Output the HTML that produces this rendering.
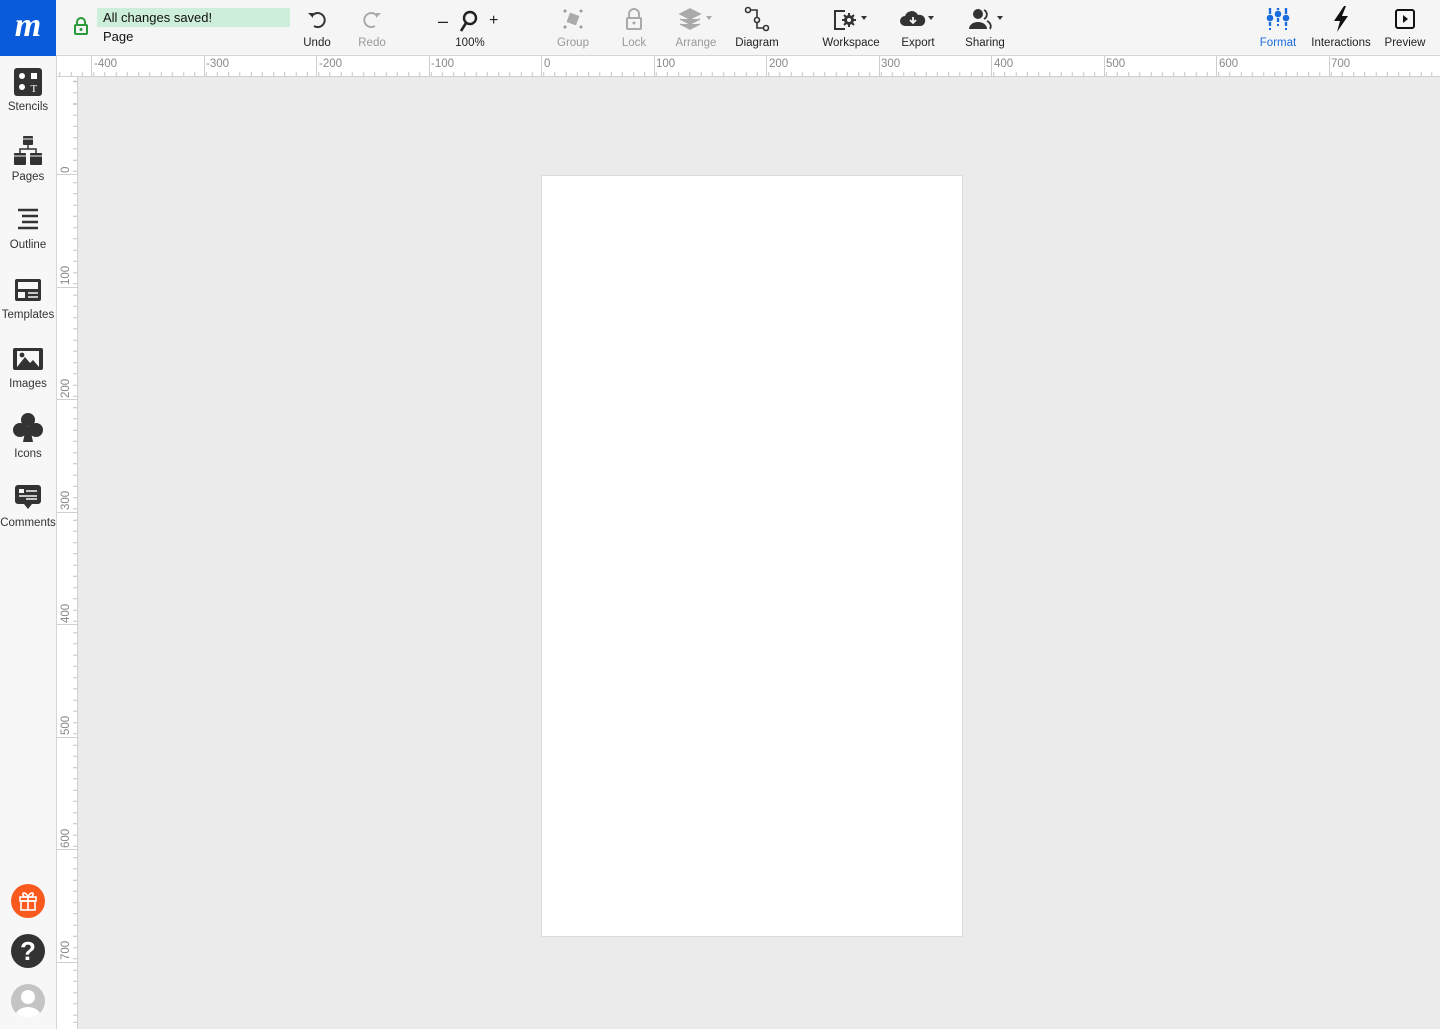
<!DOCTYPE html>
<html><head><meta charset="utf-8"><style>
*{margin:0;padding:0;box-sizing:border-box}
body{width:1440px;height:1029px;overflow:hidden;background:#ebebeb;font-family:"Liberation Sans",sans-serif;position:relative}
.top{position:absolute;left:0;top:0;width:1440px;height:56px;background:#f5f5f5;border-bottom:1px solid #d6d6d6}
.logo{position:absolute;left:0;top:0;width:56px;height:56px;background:#0a5bdc;color:#fff;font:italic bold 34px "Liberation Serif",serif;text-align:center;line-height:52px}
.side{position:absolute;left:0;top:56px;width:57px;height:973px;background:#f7f7f7;border-right:1px solid #d6d6d6}
.tb{position:absolute;top:0;height:56px;text-align:center;font-size:11.5px;color:#222}
.tb .l{position:absolute;left:0;right:0;top:37px}
.tb svg{position:absolute;top:8px;left:50%;transform:translateX(-50%)}
.dis{color:#999}
.si{position:absolute;left:0;width:56px;text-align:center;font-size:11.5px;color:#333}
.si svg{display:block;margin:0 auto 5px}
.hr{position:absolute;left:57px;top:56px;width:1383px;height:21px;background:#fff;border-bottom:1px solid #d0d0d0;overflow:hidden}
.vr{position:absolute;left:57px;top:77px;width:21px;height:952px;background:#fff;border-right:1px solid #d0d0d0;overflow:hidden}
.hr .t{position:absolute;left:0;bottom:0;width:100%;height:4px;background:repeating-linear-gradient(to right,#c4c4c4 0 1px,transparent 1px 11.25px)}
.hr .M{position:absolute;top:0;height:21px;width:1px;background:#cfcfcf}
.hr span{position:absolute;top:2px;font-size:11.5px;color:#888}
.vr .t{position:absolute;right:0;top:0;width:4px;height:100%;background:repeating-linear-gradient(to bottom,#c4c4c4 0 1px,transparent 1px 11.25px)}
.vr .M{position:absolute;left:0;width:21px;height:1px;background:#cfcfcf}
.vr span{position:absolute;left:3px;font-size:11.5px;color:#888;transform:rotate(-90deg);transform-origin:left top;white-space:nowrap}
.page{position:absolute;left:541px;top:175px;width:422px;height:762px;background:#fff;border:1px solid #dcdcdc}
.circ{position:absolute;left:11px;width:34px;height:34px;border-radius:50%}
</style></head><body>
<div class="top">
<div class="logo">m</div>
<svg style="position:absolute;left:73px;top:17px" width="16" height="18" viewBox="0 0 16 18"><path d="M4 8V5a4 4 0 0 1 8 0v3" fill="none" stroke="#2a9a3a" stroke-width="2"/><rect x="2" y="8" width="12" height="9" rx="1" fill="none" stroke="#2a9a3a" stroke-width="2"/><circle cx="8" cy="12.5" r="1.5" fill="#2a9a3a"/></svg>
<div style="position:absolute;left:97px;top:8px;width:193px;height:19px;background:#cdeed8;font-size:13px;line-height:19px;padding-left:6px;color:#111">All changes saved!</div>
<div style="position:absolute;left:103px;top:29px;font-size:13px;color:#111">Page</div>
<div class="tb" style="left:297px;width:40px"><svg width="22" height="22" viewBox="0 0 22 22"><path d="M6 8a7 7 0 1 1 2 10" fill="none" stroke="#333" stroke-width="2"/><path d="M2 5l5 0 0 5z" fill="#333"/></svg><div class="l">Undo</div></div>
<div class="tb dis" style="left:352px;width:40px"><svg width="22" height="22" viewBox="0 0 22 22"><path d="M16 8a7 7 0 1 0 -2 10" fill="none" stroke="#aaa" stroke-width="2"/><path d="M20 5l-5 0 0 5z" fill="#aaa"/></svg><div class="l">Redo</div></div>
<div style="position:absolute;left:438px;top:11px;font-size:18px;color:#222">–</div>
<svg style="position:absolute;left:458px;top:10px" width="22" height="24" viewBox="0 0 22 24"><circle cx="12" cy="8" r="6" fill="none" stroke="#222" stroke-width="2.4"/><path d="M8 13l-5 8" stroke="#222" stroke-width="2.6"/></svg>
<div style="position:absolute;left:489px;top:12px;font-size:16px;color:#222">+</div>
<div class="tb" style="left:450px;width:40px"><div class="l">100%</div></div>
<div class="tb dis" style="left:553px;width:40px"><svg width="22" height="22" viewBox="0 0 22 22"><rect x="6" y="6" width="10" height="10" fill="#aaa" transform="rotate(20 11 11)"/><g fill="#999"><circle cx="3" cy="3" r="1.5"/><circle cx="19" cy="3" r="1.5"/><circle cx="3" cy="19" r="1.5"/><circle cx="19" cy="19" r="1.5"/></g></svg><div class="l">Group</div></div>
<div class="tb dis" style="left:614px;width:40px"><svg width="18" height="22" viewBox="0 0 18 22"><path d="M4 10V6a5 5 0 0 1 10 0v4" fill="none" stroke="#aaa" stroke-width="2"/><rect x="2" y="10" width="14" height="11" rx="1" fill="none" stroke="#aaa" stroke-width="2"/><circle cx="9" cy="15" r="1.5" fill="#aaa"/></svg><div class="l">Lock</div></div>
<div class="tb dis" style="left:672px;width:48px"><svg width="36" height="22" viewBox="0 0 36 22"><path d="M2 6l10-5 10 5-10 5z M2 11l10 5 10-5 M2 16l10 5 10-5" fill="#aaa" stroke="#aaa" stroke-width="1.5"/><path d="M28 8h6l-3 4z" fill="#aaa"/></svg><div class="l">Arrange</div></div>
<div class="tb" style="left:733px;width:48px"><svg width="26" height="26" viewBox="0 0 26 26" style="top:6px"><circle cx="4" cy="4" r="2.5" fill="none" stroke="#333" stroke-width="1.6"/><circle cx="13" cy="14" r="2.5" fill="none" stroke="#333" stroke-width="1.6"/><circle cx="22" cy="22" r="2.5" fill="none" stroke="#333" stroke-width="1.6"/><path d="M6.5 4H13V11.5M13 16.5V22H19.5" fill="none" stroke="#333" stroke-width="1.6"/></svg><div class="l">Diagram</div></div>
<div class="tb" style="left:818px;width:66px"><svg width="38" height="24" viewBox="0 0 38 24"><path d="M13 3H3v18h10" fill="none" stroke="#333" stroke-width="2"/><path d="M17 5v14M10 12h14M12 7l10 10M22 7l-10 10" stroke="#333" stroke-width="2"/><circle cx="17" cy="12" r="5" fill="#333"/><circle cx="17" cy="12" r="2" fill="#f5f5f5"/><path d="M29 8h6l-3 4z" fill="#333"/></svg><div class="l">Workspace</div></div>
<div class="tb" style="left:896px;width:44px"><svg width="38" height="22" viewBox="0 0 38 22"><path d="M6 18a5 5 0 0 1 0-10a7 7 0 0 1 13-1a5 5 0 0 1 3 11z" fill="#333"/><path d="M14 9v6M11 12l3 3 3-3" stroke="#f5f5f5" stroke-width="1.8" fill="none"/><path d="M29 8h6l-3 4z" fill="#333"/></svg><div class="l">Export</div></div>
<div class="tb" style="left:962px;width:46px"><svg width="38" height="22" viewBox="0 0 38 22"><circle cx="12" cy="6" r="5" fill="#333"/><path d="M3 21a9 7 0 0 1 18 0z" fill="#333"/><path d="M18 2a5 5 0 0 1 0 9M21 13a7 6 0 0 1 3 8" stroke="#333" stroke-width="1.8" fill="none"/><path d="M31 8h6l-3 4z" fill="#333"/></svg><div class="l">Sharing</div></div>
<div class="tb" style="left:1257px;width:42px;color:#1a6de0"><svg width="24" height="24" viewBox="0 0 24 24"><g stroke="#1a6de0" stroke-width="2.4"><path d="M4 0v6M4 14v4M12 0v2M12 10v4M20 0v6M20 14v4"/></g><g fill="#1a6de0"><circle cx="4" cy="10" r="3.3"/><circle cx="12" cy="6" r="3.3"/><circle cx="20" cy="10" r="3.3"/></g><g fill="#1a6de0"><rect x="3" y="20" width="2" height="2"/><rect x="11" y="16" width="2" height="2"/><rect x="19" y="20" width="2" height="2"/></g></svg><div class="l">Format</div></div>
<div class="tb" style="left:1306px;width:70px"><svg width="18" height="26" viewBox="0 0 18 26" style="top:6px"><path d="M12 0L2 15h6l-3 11 11-16h-6l4-10z" fill="#111"/></svg><div class="l">Interactions</div></div>
<div class="tb" style="left:1381px;width:48px"><svg width="22" height="22" viewBox="0 0 22 22"><rect x="2" y="2" width="18" height="18" rx="2" fill="none" stroke="#111" stroke-width="2"/><path d="M9 7l5 4-5 4z" fill="#111"/></svg><div class="l">Preview</div></div>
</div>

<div class="side">
<div class="si" style="top:12px"><svg width="28" height="28" viewBox="0 0 28 28"><rect width="28" height="28" rx="3" fill="#333"/><circle cx="8" cy="8" r="3" fill="#fff"/><rect x="17" y="5" width="6" height="6" fill="#fff"/><circle cx="8" cy="19" r="3" fill="#fff"/><text x="16.5" y="24" font-size="11" fill="#fff" font-family="Liberation Serif">T</text></svg>Stencils</div>
<div class="si" style="top:80px"><svg width="28" height="30" viewBox="0 0 28 30"><rect x="9" y="0" width="10" height="9" rx="1" fill="#333"/><path d="M14 9v4M6 18v-5h16v5" stroke="#333" stroke-width="1.5" fill="none"/><rect x="0" y="17" width="12" height="12" rx="1" fill="#333"/><rect x="16" y="17" width="12" height="12" rx="1" fill="#333"/><path d="M0 20h12M16 20h12M9 3h10" stroke="#f7f7f7" stroke-width="1"/></svg>Pages</div>
<div class="si" style="top:151px"><svg width="28" height="27" viewBox="0 0 28 27"><g stroke="#333" stroke-width="2.4"><path d="M4 3h20M8 9h16M8 15h16M4 21h20"/></g></svg>Outline</div>
<div class="si" style="top:220px"><svg width="28" height="28" viewBox="0 0 28 28"><rect x="1" y="3" width="26" height="22" rx="2" fill="#333"/><rect x="4" y="6" width="20" height="7" fill="#f7f7f7"/><rect x="4" y="16" width="7" height="6" fill="#f7f7f7"/><path d="M14 17h10M14 21h10" stroke="#f7f7f7" stroke-width="1.5"/></svg>Templates</div>
<div class="si" style="top:289px"><svg width="32" height="28" viewBox="0 0 32 28"><rect x="1" y="3" width="30" height="22" rx="2" fill="#333"/><rect x="5" y="6" width="22" height="16" fill="#f7f7f7"/><path d="M5 22l8-10 5 6 3-3 6 7z" fill="#333"/><circle cx="10" cy="10" r="2.4" fill="#333"/></svg>Images</div>
<div class="si" style="top:355px"><svg width="32" height="32" viewBox="0 0 32 32"><circle cx="16" cy="9" r="7" fill="#333"/><circle cx="8" cy="19" r="7" fill="#333"/><circle cx="24" cy="19" r="7" fill="#333"/><path d="M14 16h4l3 15H11z" fill="#333"/></svg>Icons</div>
<div class="si" style="top:428px"><svg width="28" height="28" viewBox="0 0 28 28"><rect x="1" y="1" width="26" height="19" rx="3" fill="#333"/><path d="M10 20l4 5 4-5z" fill="#333"/><rect x="5" y="5" width="5" height="4" fill="#f7f7f7"/><path d="M12 7h11M5 12h18M12 15h11" stroke="#f7f7f7" stroke-width="1.6"/></svg>Comments</div>
<div class="circ" style="top:828px;background:#fa5a1e"><svg width="34" height="34" viewBox="0 0 34 34"><g fill="none" stroke="#fff" stroke-width="1.6"><rect x="9" y="13" width="16" height="4"/><rect x="10" y="17" width="14" height="9"/><path d="M17 13v13M17 13c-2-5-6-5-5-2s5 2 5 2c2-5 6-5 5-2s-5 2-5 2"/></g></svg></div>
<div class="circ" style="top:878px;background:#333;color:#fff;font:bold 26px 'Liberation Sans';text-align:center;line-height:34px">?</div>
<div class="circ" style="top:928px;background:#c4c4c4;overflow:hidden"><svg width="34" height="34" viewBox="0 0 34 34"><circle cx="17" cy="13" r="7" fill="#fff"/><ellipse cx="17" cy="33" rx="13" ry="10" fill="#fff"/></svg></div>
</div>

<div class="hr">
<div class="t" style="background-position:-8.75px 0"></div>
<div class="M" style="left:34px"></div><span style="left:37px">-400</span>
<div class="M" style="left:146.5px"></div><span style="left:149px">-300</span>
<div class="M" style="left:259px"></div><span style="left:262px">-200</span>
<div class="M" style="left:371.5px"></div><span style="left:374px">-100</span>
<div class="M" style="left:484px"></div><span style="left:487px">0</span>
<div class="M" style="left:596.5px"></div><span style="left:599px">100</span>
<div class="M" style="left:709px"></div><span style="left:712px">200</span>
<div class="M" style="left:821.5px"></div><span style="left:824px">300</span>
<div class="M" style="left:934px"></div><span style="left:937px">400</span>
<div class="M" style="left:1046.5px"></div><span style="left:1049px">500</span>
<div class="M" style="left:1159px"></div><span style="left:1162px">600</span>
<div class="M" style="left:1271.5px"></div><span style="left:1274px">700</span>
</div>
<div class="vr">
<div class="t" style="background-position:0 -7.25px"></div>
<div class="M" style="top:97px"></div><span style="top:96px">0</span>
<div class="M" style="top:209.5px"></div><span style="top:208px">100</span>
<div class="M" style="top:322px"></div><span style="top:321px">200</span>
<div class="M" style="top:434.5px"></div><span style="top:433px">300</span>
<div class="M" style="top:547px"></div><span style="top:546px">400</span>
<div class="M" style="top:659.5px"></div><span style="top:658px">500</span>
<div class="M" style="top:772px"></div><span style="top:771px">600</span>
<div class="M" style="top:884.5px"></div><span style="top:883px">700</span>
</div>
<div class="page"></div>
</body></html>
